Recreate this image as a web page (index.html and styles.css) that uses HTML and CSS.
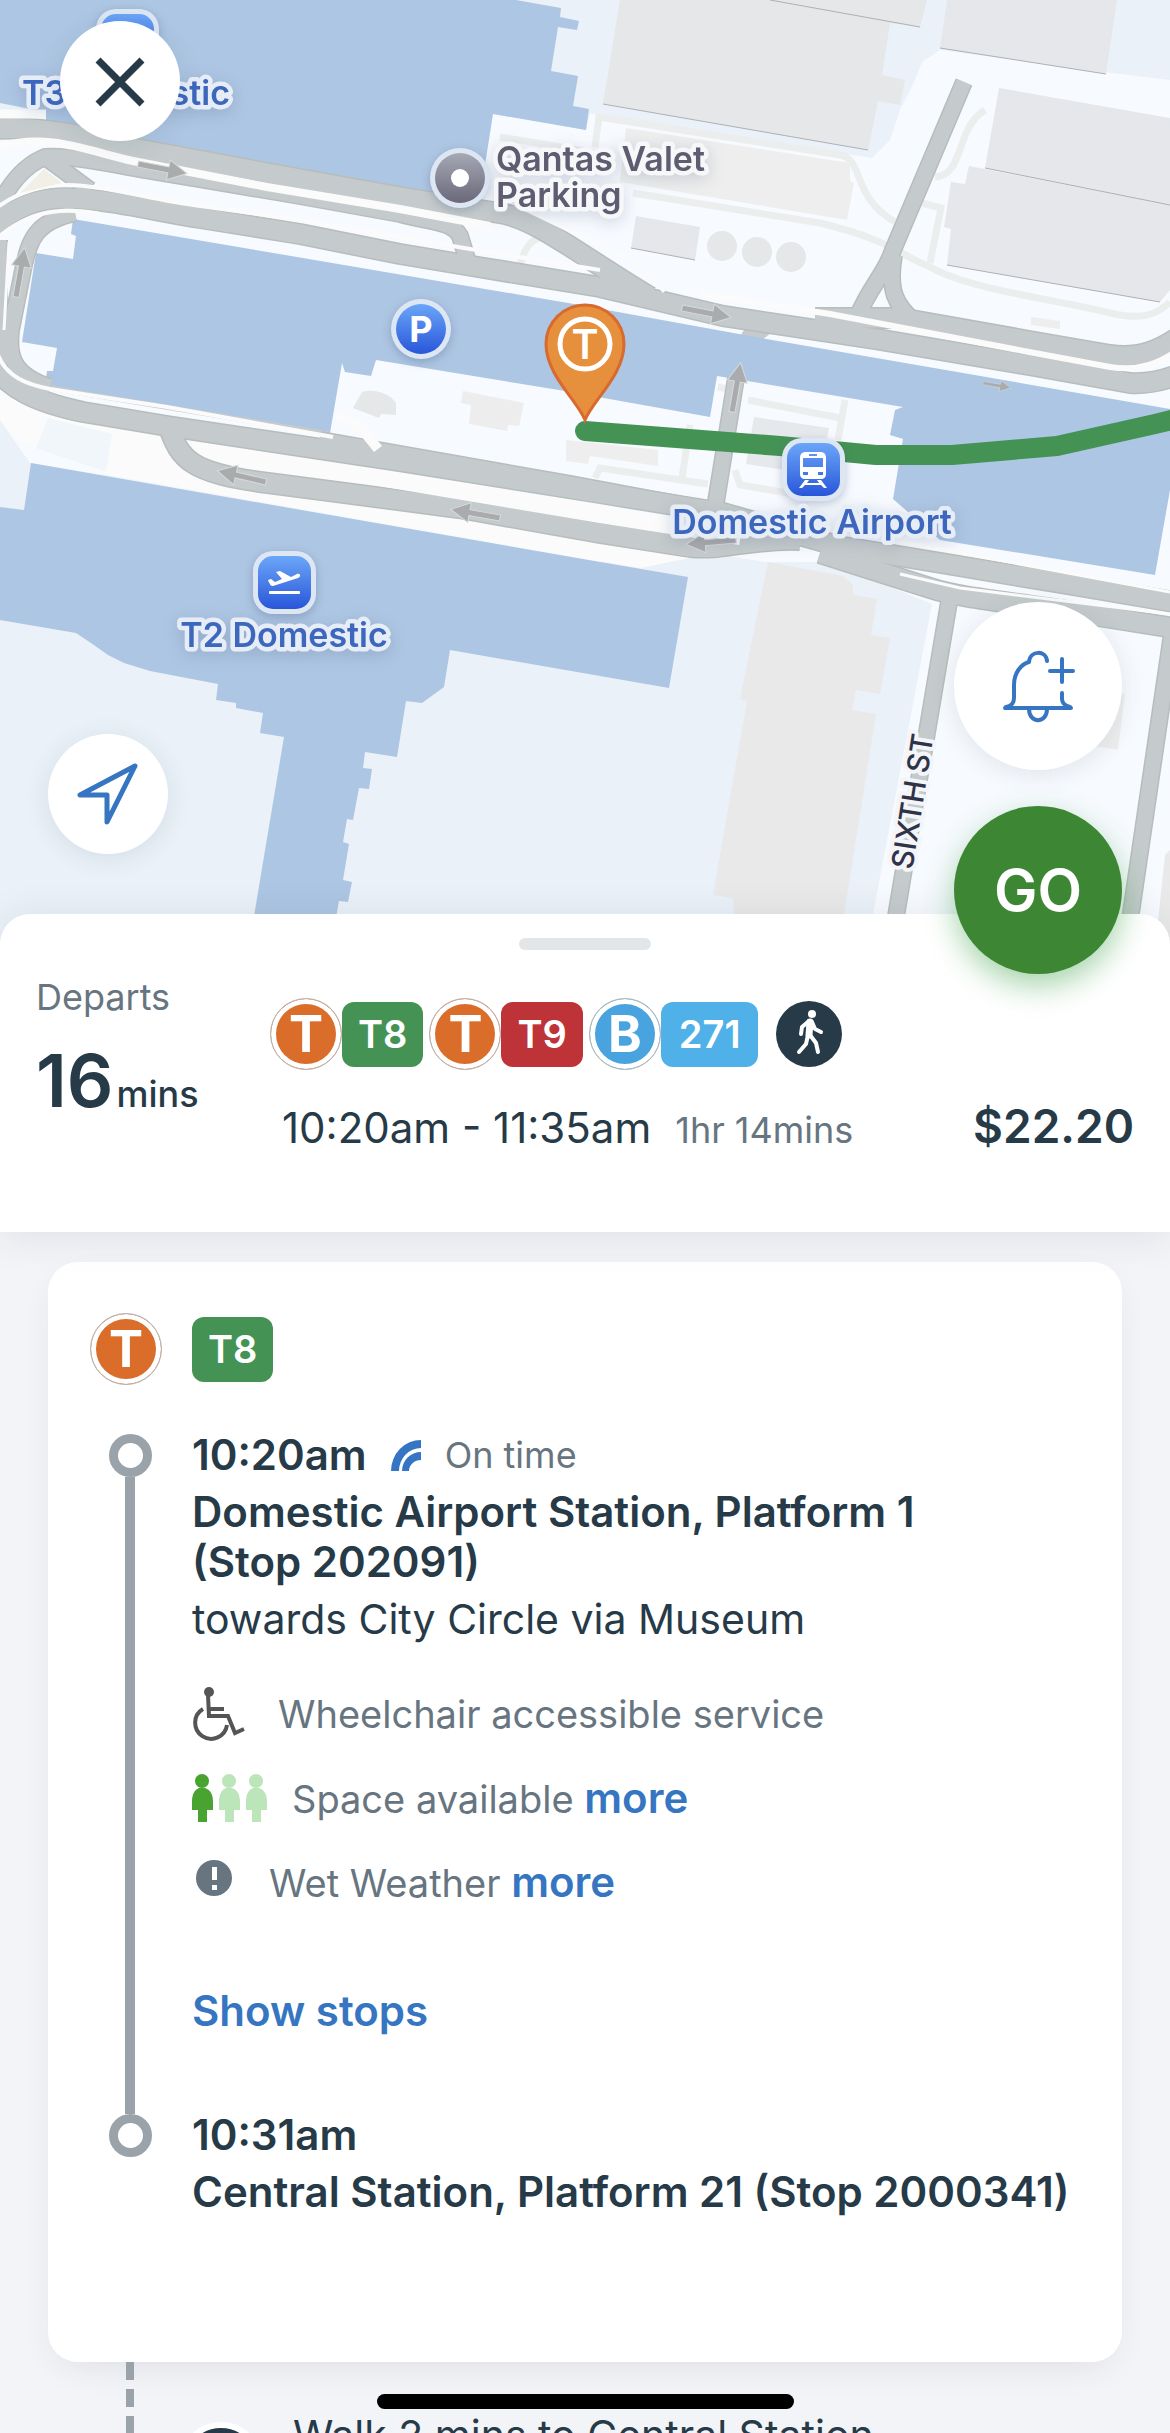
FILE: index.html
```html
<!DOCTYPE html>
<html lang="en">
<head>
    <meta charset="UTF-8">
    <meta name="viewport" content="width=device-width, initial-scale=1">
    <title>Trip to Central Station</title>
    <link rel="stylesheet" href="styles.css">
</head>

<body>
<div class="app">
    <section class="map-area">
        <svg class="map" viewBox="0 0 1170 940" role="img" aria-label="Map of Domestic Airport">
            <defs>
                <linearGradient id="poi-blue" x1="0" y1="0" x2="0" y2="1">
                    <stop offset="0" stop-color="#6ba6f8"/>
                    <stop offset="1" stop-color="#2956d9"/>
                </linearGradient>
                <linearGradient id="poi-grey" x1="0" y1="0" x2="0" y2="1">
                    <stop offset="0" stop-color="#a6a8b5"/>
                    <stop offset="1" stop-color="#6a6879"/>
                </linearGradient>
                <path id="arrow" d="M0 -3H31V-10L50 0L31 10V3H0z"/>
                <g id="roads-main">
                    <path d="M-5 129C50 126 90 138 133 148L267 173L400 197L505 214C540 222 580 255 650 297"/>
                    <path d="M-12 232C15 205 40 198 65 198C110 199 150 210 200 218L300 234L400 254L478 267L600 287L723 316L876 339L1029 365L1130 383C1145 384 1160 382 1180 374"/>
                    <path d="M-8 364C8 388 35 402 83 412L167 426L267 441L400 461L600 493L723 513L838 546L953 565L1067 584L1180 603"/>
                    <path d="M168 425C180 460 190 473 268 483L459 508L600 533L690 547C730 550 750 538 800 540"/>
                    <path d="M820 553L930 588C960 598 1010 602 1067 611L1180 629"/>
                    <path d="M815 318L900 318L1029 341L1110 355C1140 359 1160 350 1180 336"/>
                </g>
                <g id="roads-side">
                    <path d="M-4 212C8 185 25 165 45 157C70 155 110 164 140 169L200 179L300 196L400 214C440 224 452 222 460 236L468 262"/>
                    <path d="M45 157L90 190"/>
                    <path d="M75 213C35 222 30 240 24 265L11 330C8 355 12 375 50 387"/>
                    <path d="M-1 240V368"/>
                    <path d="M964 82L893 250C885 275 870 285 857 318"/>
                    <path d="M894 255C888 290 895 305 915 322"/>
                    <path d="M736 378L715 508"/>
                    <path d="M951 590L892 940"/>
                    <path d="M1174 620L1127 940"/>
                </g>
            </defs>

            <!-- ground -->
            <rect width="1170" height="940" fill="#eaf1f8"/>
            <path fill="#f7fafe" d="M0 110L480 180L493 114L586 130L590 113L597 115L872 158L890 140L900 110L915 80L922 62L940 50L1105 72L1170 80V940H868L932 604L830 562L765 562L700 552L600 562L110 476L30 463L0 420z"/>
            <path fill="#fbfbfb" d="M0 395L118 425L600 505L800 545L700 556L640 568L106 474L20 440L0 420z"/>
            <path fill="#f1f6fb" d="M48 418L112 434L106 472L36 448z"/>

            <!-- grey buildings -->
            <g fill="#e5e7e8">
                <path d="M620 0H927L920 27L890 23L882 75L905 80L900 105L878 101L868 150L603 104z"/>
                <path fill="#e6e7eb" d="M947 0H1117L1106 74L940 48z"/>
                <path fill="#e6e7eb" d="M999 88L1170 118V205L985 168z"/>
                <path fill="#e6e7eb" d="M969 166L1170 205V290L1160 302L947 265L951 229L944 227L951 182L965 184z"/>
                <path fill="#eeeeee" d="M626 128L850 163V181L854 183L847 220L620 182z"/>
                <path fill="#e6e7eb" d="M636 216L700 227L695 260L631 248z"/>
                <circle cx="722" cy="246" r="15"/>
                <circle cx="757" cy="252" r="15"/>
                <circle cx="791" cy="257" r="15"/>
                <path fill="#e9e9e9" d="M768 562L843 576L853 585V595L877 599L871 635L890 638L880 694L856 690L852 710L876 714L840 940H735L733 898L713 895L747 701L740 699z"/>
                <path d="M362 392C375 388 390 394 396 403V415L381 414L379 418L353 408z"/>
                <path fill="#ededed" d="M463 391L524 403L519 426L508 425L507 431L469 424L471 405L461 403z"/>
                <path fill="#eeeeee" d="M566 440L658 450V466L590 456L588 464L566 461z"/>
                <path fill="#e6e9ec" d="M754 417L829 428L820 475L746 464z"/>
                <path fill="#eeeeee" d="M1031 317L1060 321V329L1031 325z"/>
                <path fill="#eeeeee" d="M1100 690L1125 694L1118 750L1095 746z"/>
                <path fill="#e9e9e9" d="M1165 855L1170 850V940H1156z"/>
            </g>
            <path fill="none" stroke="#aeb0b4" d="M770 0L920 27M603 104L868 150M940 48L1106 74M985 168L1170 205M947 265L1160 302M631 248L695 260"/>

            <!-- footpaths -->
            <g fill="none" stroke="#eceeee" stroke-width="7">
                <path d="M595 147L599 117L840 155C865 160 850 195 895 222"/>
                <path d="M633 193L820 223C890 240 900 255 930 267C970 290 1060 300 1110 313C1140 320 1155 316 1170 302"/>
                <path d="M985 110C955 128 965 175 935 177"/>
                <path d="M922 203L941 208L930 263"/>
                <path d="M520 265C525 248 530 240 540 238M500 137L585 151"/>
                <path d="M718 387L728 389M748 400L840 418M845 400L838 440M735 470L740 485L800 495M595 478L600 468L708 484M690 425L682 478"/>
            </g>
            <path fill="#c5cbcc" d="M748 324L776 329L762 340L740 336z"/>

            <!-- terminals -->
            <g fill="#adc6e3">
                <path d="M0 0H516L561 8L560 17L579 21L577 30L558 27L551 71L578 76L573 106L589 109L586 130L493 114L479 203L425 194L46 130V112L0 103z"/>
                <path d="M73 219L574 304L761 338L1170 409V490L1155 575L940 540L893 499L903 439L890 435L895 410L903 407L717 376L710 417L559 390L376 360L371 376L345 372L342 363L330 433L45 386L47 371L53 371L57 348L22 342L36 253L73 259L76 236L71 234z"/>
                <path d="M0 507L24 510L31 463L600 562L688 577L669 688L600 676L450 650L444 687L422 703L406 701L397 757L365 752L363 768L372 769L369 789L359 788L353 820L347 819L343 842L349 844L343 880L352 882L348 902L339 901L332 940H250L284 737L260 733L263 713L236 708V703L216 700L218 684L150 671L124 663L108 655L91 643L76 633L0 620z"/>
            </g>

            <!-- roads, drawn twice: edge then surface -->
            <path fill="none" stroke="#c5cbcc" stroke-width="5" d="M50 388L330 434"/>
            <path fill="none" stroke="#b6bdbc" stroke-width="14" d="M320 438L570 482L730 512"/>
            <g fill="none" stroke="#b6bdbc" stroke-linejoin="round">
                <use href="#roads-side" stroke-width="18"/>
                <use href="#roads-main" stroke-width="22"/>
            </g>
            <path fill="none" stroke="#c5cbcc" stroke-width="11" d="M320 438L570 482L730 512"/>
            <g fill="none" stroke="#c5cbcc" stroke-linejoin="round">
                <use href="#roads-side" stroke-width="15"/>
                <use href="#roads-main" stroke-width="19"/>
            </g>
            <g fill="none" stroke="#fbfbfb" stroke-width="6">
                <path d="M0 114H46" stroke-width="9"/>
                <path d="M-2 147C50 132 90 152 133 161L267 187L400 209L490 226" stroke-width="8"/>
                <path d="M-5 209C20 190 45 185 67 185C110 186 150 200 200 206L300 220L470 249L600 270" stroke-width="4"/>
                <path d="M-5 240C15 222 35 213 60 211C75 210 85 211 100 214" stroke-width="4"/>
                <path d="M-3 352C5 378 30 385 50 389L167 407L333 437" stroke-width="4"/>
                <path d="M9 242L4 330" stroke-width="3"/>
                <path d="M700 294L830 314L1029 352L1110 367C1140 372 1160 362 1175 352"/>
                <path d="M205 452L600 518L740 540" stroke-width="10"/>
                <path d="M515 205L640 265L664 292" stroke-width="3"/>
                <path d="M337 415C355 420 365 432 378 449" stroke-width="10"/>
                <path d="M890 540L1170 592M900 574L960 588L1170 614" stroke-width="3"/>
            </g>
            <path fill="#f2f0e6" d="M44 169L62 183L20 193z"/>

            <g fill="#a9abad" stroke="#d7dadb" stroke-width="1">
                <use href="#arrow" transform="translate(138 164) rotate(11)"/>
                <use href="#arrow" transform="translate(16 297) rotate(-80)"/>
                <use href="#arrow" transform="translate(682 308) rotate(11)"/>
                <use href="#arrow" transform="translate(732 412) rotate(-80)"/>
                <use href="#arrow" transform="translate(983 383) rotate(10) scale(.56)"/>
                <use href="#arrow" transform="translate(266 482) rotate(193)"/>
                <use href="#arrow" transform="translate(500 518) rotate(190)"/>
                <use href="#arrow" transform="translate(736 540) rotate(175)"/>
            </g>

            <!-- train route -->
            <path fill="none" stroke="#449355" stroke-width="20" stroke-linecap="round" stroke-linejoin="round" d="M585 431L780 446L876 455H952L1057 446L1155 424L1180 418"/>
            <path fill="#e68f3c" stroke="#d96a2e" stroke-width="3" d="M585 420C577 400 546 375 546 344A39 39 0 0 1 624 344C624 375 593 400 585 420z"/>
            <circle cx="585" cy="344" r="25" fill="none" stroke="#fff" stroke-width="5"/>
            <text class="pin-letter" x="585" y="359">T</text>

            <!-- places -->
            <g class="poi">
                <circle cx="421" cy="329" r="30"/>
                <circle cx="460" cy="178" r="30"/>
                <rect x="96" y="9" width="63" height="63" rx="20"/>
                <rect x="253" y="551" width="63" height="63" rx="20"/>
                <rect x="782" y="438" width="63" height="63" rx="20"/>
            </g>
            <g fill="url(#poi-blue)">
                <circle cx="421" cy="329" r="25"/>
                <rect x="101" y="14" width="53" height="53" rx="15"/>
                <rect x="258" y="556" width="53" height="53" rx="15"/>
                <rect x="787" y="443" width="53" height="53" rx="15"/>
            </g>
            <circle cx="460" cy="178" r="25" fill="url(#poi-grey)"/>
            <circle cx="460" cy="178" r="9" fill="#fff"/>
            <text class="poi-letter" x="421" y="342">P</text>
            <g fill="#fff">
                <path d="M268 580L271 579L275 582L282 579L276 572L280 571L291 577L297 574C301 573 301 577 298 578L273 586C271 586 270 585 268 580z"/>
                <rect x="269" y="591" width="31" height="3" rx="1"/>
                <path fill-rule="evenodd" d="M806 452H820C824 452 826 454 826 458V474C826 477 824 479 821 479H805C802 479 800 477 800 474V458C800 454 802 452 806 452zM803 458V467H823V458zM809 454V456H817V454zM803 472V475H808V472zM818 472V475H823V472z"/>
                <path d="M805 480H809L807 483H819L817 480H821L827 488H824L821 485H805L802 488H799z"/>
            </g>
            <g class="place">
                <text x="126" y="105" text-anchor="middle">T3 Domestic</text>
                <text x="284" y="647" text-anchor="middle">T2 Domestic</text>
                <text x="812" y="534" text-anchor="middle">Domestic Airport</text>
                <g class="place-grey">
                    <text x="496" y="171">Qantas Valet</text>
                    <text x="496" y="207">Parking</text>
                </g>
            </g>
            <text class="street" transform="translate(923 803) rotate(-81)" text-anchor="middle">SIXTH ST</text>
        </svg>

        <button class="round-btn close-btn" aria-label="Close">
            <svg viewBox="0 0 120 120"><path d="M38 39L82 83M82 39L38 83" stroke="#263a48" stroke-width="7"/></svg>
        </button>
        <button class="round-btn locate-btn" aria-label="My location">
            <svg viewBox="0 0 120 120"><path d="M87 32L32 61H59V88z" fill="none" stroke="#3575c1" stroke-width="5" stroke-linejoin="round"/></svg>
        </button>
        <div class="map-actions">
            <button class="round-btn alert-btn" aria-label="Add trip alert">
                <svg viewBox="0 0 168 168">
                    <g fill="none" stroke="#3575c1" stroke-width="4" stroke-linecap="round" stroke-linejoin="round">
                        <path d="M51 106H117M52 105C58 104 60 101 60 96V83C60 71 67 62 75 60C76 48 92 48 93 59"/>
                        <path d="M108 91V97C108 102 112 104 116 105M75 107C75 122 93 122 93 107"/>
                        <path d="M96 69H119M108 57V80"/>
                    </g>
                </svg>
            </button>
            <button class="round-btn go-btn">GO</button>
        </div>
    </section>

    <header class="sheet">
        <div class="handle"></div>
        <div class="summary">
            <div class="departs">
                <div class="departs-label">Departs</div>
                <div class="departs-time"><strong>16</strong>mins</div>
            </div>
            <div class="trip">
                <div class="modes">
                    <span class="mode mode-train">T</span><span class="line line-t8">T8</span>
                    <span class="mode mode-train">T</span><span class="line line-t9">T9</span>
                    <span class="mode mode-bus">B</span><span class="line line-bus">271</span>
                    <span class="walk">
                        <svg viewBox="0 0 66 66">
                            <circle cx="36" cy="13" r="4" fill="#fff"/>
                            <g fill="none" stroke="#fff" stroke-width="4" stroke-linecap="round" stroke-linejoin="round">
                                <path d="M34 21L33 34" stroke-width="7"/>
                                <path d="M33 20L26 26L25 33M36 21L39 28L45 31M32 34L30 43L23 51M34 34L40 42L42 51"/>
                            </g>
                        </svg>
                    </span>
                </div>
                <div class="times">
                    <span class="time-range">10:20am - 11:35am</span>
                    <span class="duration">1hr 14mins</span>
                    <span class="price">$22.20</span>
                </div>
            </div>
        </div>
    </header>

    <main class="legs">
        <article class="card">
            <div class="card-head">
                <span class="mode mode-train">T</span>
                <span class="line line-t8">T8</span>
            </div>
            <div class="leg">
                <div class="rail"><i class="ring"></i><i class="rail-line"></i></div>
                <div class="stop stop-from">
                    <div class="stop-time">
                        <b>10:20am</b>
                        <svg class="live" viewBox="0 0 30 31" fill="#3575c4"><path d="M0 31A30 31 0 0 1 30 0V8A22 23 0 0 0 8 31z"/><path d="M11 31A19 19 0 0 1 30 12V20A12 11 0 0 0 18 31z"/></svg>
                        <span class="status">On time</span>
                    </div>
                    <h2>Domestic Airport Station, Platform 1<br>(Stop 202091)</h2>
                    <p class="towards">towards City Circle via Museum</p>
                    <ul class="notes">
                        <li>
                            <svg width="61" height="54" viewBox="0 0 61 54">
                                <circle cx="17" cy="5" r="5" fill="#555"/>
                                <path fill="none" stroke="#555" stroke-width="4" d="M16 8L17 29H36L43 46L52 42M17 22H32M11 22A16 16 0 1 0 35 38"/>
                            </svg>
                            <span>Wheelchair accessible service</span>
                        </li>
                        <li>
                            <svg width="75" height="48" viewBox="0 0 75 48">
                                <g fill="#49a331"><circle cx="10" cy="7" r="7"/><path d="M7 14H13C19 16 21 21 21 28V36H15V48H6V36H0V28C0 21 2 16 7 14z"/></g>
                                <g fill="#bce5b9">
                                    <circle cx="37" cy="7" r="7"/><path d="M34 14H40C46 16 48 21 48 28V36H42V48H33V36H27V28C27 21 29 16 34 14z"/>
                                    <circle cx="64" cy="7" r="7"/><path d="M61 14H67C73 16 75 21 75 28V36H69V48H60V36H54V28C54 21 56 16 61 14z"/>
                                </g>
                            </svg>
                            <span>Space available <a href="#">more</a></span>
                        </li>
                        <li>
                            <svg width="52" height="44" viewBox="0 0 52 44">
                                <circle cx="22" cy="18" r="18" fill="#677580"/>
                                <path fill="#fff" d="M20 7H25V20H20zM20 25H25V30H20z"/>
                            </svg>
                            <span>Wet Weather <a href="#">more</a></span>
                        </li>
                    </ul>
                    <button class="show-stops">Show stops</button>
                </div>
                <div class="rail"><i class="ring"></i></div>
                <div class="stop">
                    <div class="stop-time"><b>10:31am</b></div>
                    <h2>Central Station, Platform 21 (Stop 2000341)</h2>
                </div>
            </div>
        </article>
        <div class="walk-leg">
            <i class="dashes"></i>
            <span class="walk walk-big"></span>
            <span>Walk 2 mins to Central Station</span>
        </div>
    </main>
    <div class="home-bar"></div>
</div>
</body>
</html>
```

FILE: styles.css
```css
*{
    box-sizing: border-box;
}
body,h2,p,ul{
    margin: 0;
    padding: 0;
}
body{
    font-family: Inter, "Liberation Sans", sans-serif;
    font-size: 41px;
    line-height: 50px;
    color: #263a48;
    background: #f3f4f7;
}
ul{
    list-style: none;
}
button{
    border: none;
    padding: 0;
    font-family: inherit;
    cursor: pointer;
}
svg{
    display: block;
}
.app{
    position: relative;
    display: flex;
    flex-direction: column;
    height: 100vh;
    overflow: hidden;
}

/* map */
.map-area{
    position: relative;
    flex: none;
}
.map{
    width: 100%;
    height: auto;
}
.pin-letter,.poi-letter{
    fill: #fff;
    font-size: 41px;
    font-weight: 600;
    text-anchor: middle;
}
.poi-letter{
    font-size: 36px;
    font-weight: 700;
}
.poi{
    fill: #dde7f4;
    filter: drop-shadow(0 3px 5px rgba(60,80,120,0.3));
}
.place{
    fill: #3d66bd;
    stroke: #e6edf7;
    stroke-width: 9px;
    stroke-linejoin: round;
    paint-order: stroke;
    font-size: 34px;
    font-weight: 600;
    filter: drop-shadow(0 4px 8px rgba(60,80,120,0.2));
}
.place-grey{
    fill: #5d5c70;
    stroke: #f6f7f9;
}
.street{
    fill: #303348;
    stroke: #f3f5f8;
    stroke-width: 8px;
    stroke-linejoin: round;
    paint-order: stroke;
    font-size: 30px;
    font-weight: 500;
}
.round-btn{
    width: 120px;
    height: 120px;
    border-radius: 50%;
    background: #fff;
    box-shadow: 0 4px 24px rgba(60,80,110,0.12);
}
.close-btn{
    position: absolute;
    top: 21px;
    left: 60px;
}
.locate-btn{
    position: absolute;
    left: 48px;
    bottom: 86px;
}
/* hangs over the top edge of the sheet */
.map-actions{
    position: absolute;
    right: 48px;
    bottom: -34px;
    z-index: 2;
    display: flex;
    flex-direction: column;
    gap: 36px;
}
.alert-btn,.go-btn{
    width: 168px;
    height: 168px;
}
.go-btn{
    background: #3d8734;
    box-shadow: 0 12px 30px rgba(60,160,70,0.45);
    color: #fff;
    font-size: 58px;
    font-weight: 600;
}

/* trip summary */
.sheet{
    position: relative;
    z-index: 1;
    flex: none;
    margin-top: -26px;
    padding: 24px 36px 77px;
    border-radius: 30px 30px 0 0;
    background: #fff;
    box-shadow: 0 4px 40px rgba(40,50,80,0.1);
}
.handle{
    width: 132px;
    height: 12px;
    margin: 0 auto 22px;
    border-radius: 6px;
    background: #e2e6e9;
}
.summary{
    display: flex;
}
.departs{
    width: 234px;
}
.departs-label,.duration,.status,.notes{
    color: #677580;
    font-size: 36px;
}
.departs-time{
    margin-top: 34px;
    font-size: 36px;
    font-weight: 500;
}
.departs-time strong{
    margin-right: 3px;
    font-size: 73px;
    font-weight: 600;
}
.trip{
    flex: 1;
    padding-top: 26px;
}
.modes{
    display: flex;
    align-items: center;
}
.mode{
    width: 72px;
    height: 72px;
    border: 1px solid #b5b5b5;
    border-radius: 50%;
    box-shadow: inset 0 0 0 5px #fff;
    color: #fff;
    font-size: 51px;
    font-weight: 700;
    line-height: 70px;
    text-align: center;
}
.mode-train{
    background: #db6d2b;
}
.mode-bus{
    background: #48a3de;
}
.line{
    height: 65px;
    margin-right: 6px;
    padding: 0 16px;
    border-radius: 12px;
    color: #fff;
    font-size: 38px;
    font-weight: 600;
    line-height: 65px;
}
.line-t8{
    background: #449355;
}
.line-t9{
    background: #be3337;
}
.line-bus{
    padding: 0 18px;
    background: #50b1e8;
}
.walk{
    width: 66px;
    height: 66px;
    margin-left: 12px;
    border-radius: 50%;
    background: #263a48;
}
.times{
    display: flex;
    align-items: baseline;
    margin-top: 31px;
    padding-left: 12px;
}
.time-range{
    font-size: 42px;
}
.duration{
    margin-left: 24px;
}
.price{
    margin-left: auto;
    font-size: 46px;
    font-weight: 600;
}

/* legs */
.legs{
    flex: 1;
    min-height: 0;
    overflow: hidden;
    padding: 30px 48px 0;
}
.card{
    padding: 51px 24px 145px 42px;
    border-radius: 30px;
    background: #fff;
    box-shadow: 0 12px 36px -12px rgba(40,50,80,0.12);
}
.card-head{
    display: flex;
    align-items: center;
    gap: 30px;
    margin-bottom: 49px;
}
.leg{
    display: grid;
    grid-template-columns: 80px 1fr;
    column-gap: 22px;
}
.rail{
    display: flex;
    flex-direction: column;
    align-items: center;
}
.ring{
    width: 43px;
    height: 43px;
    border: 9px solid #9ba3aa;
    border-radius: 50%;
}
.rail-line{
    flex: 1;
    width: 10px;
    background: #9ba3aa;
}
.stop{
    margin-top: -4px;
}
.stop-from{
    padding-bottom: 78px;
}
.stop-time{
    display: flex;
    align-items: center;
}
.stop-time b,.stop h2,.notes a,.show-stops{
    font-size: 42px;
    font-weight: 600;
}
.live{
    width: 30px;
    height: 31px;
    margin: 0 24px;
}
.stop h2{
    margin-top: 7px;
    line-height: 50px;
}
.towards{
    margin-top: 7px;
}
.notes{
    display: grid;
    gap: 30px;
    margin: 43px 0 77px;
    font-size: 38px;
}
.notes li{
    display: flex;
    align-items: center;
    gap: 25px;
    height: 54px;
}
.notes a,.show-stops{
    color: #3575c1;
    text-decoration: none;
}
.show-stops{
    display: block;
    background: none;
    line-height: 50px;
}
.walk-leg{
    display: flex;
    align-items: flex-start;
    height: 160px;
}
.dashes{
    width: 8px;
    height: 160px;
    margin-left: 78px;
    background: repeating-linear-gradient(#9ba3aa 0 18px, transparent 18px 27px);
}
.walk-big{
    width: 84px;
    height: 84px;
    margin: 60px 30px 0 45px;
    border: 6px solid #fff;
}
.walk-big + span{
    margin-top: 48px;
}
.home-bar{
    position: absolute;
    left: 50%;
    bottom: 24px;
    z-index: 3;
    width: 417px;
    height: 15px;
    margin-left: -208px;
    border-radius: 8px;
    background: #000;
}
```
